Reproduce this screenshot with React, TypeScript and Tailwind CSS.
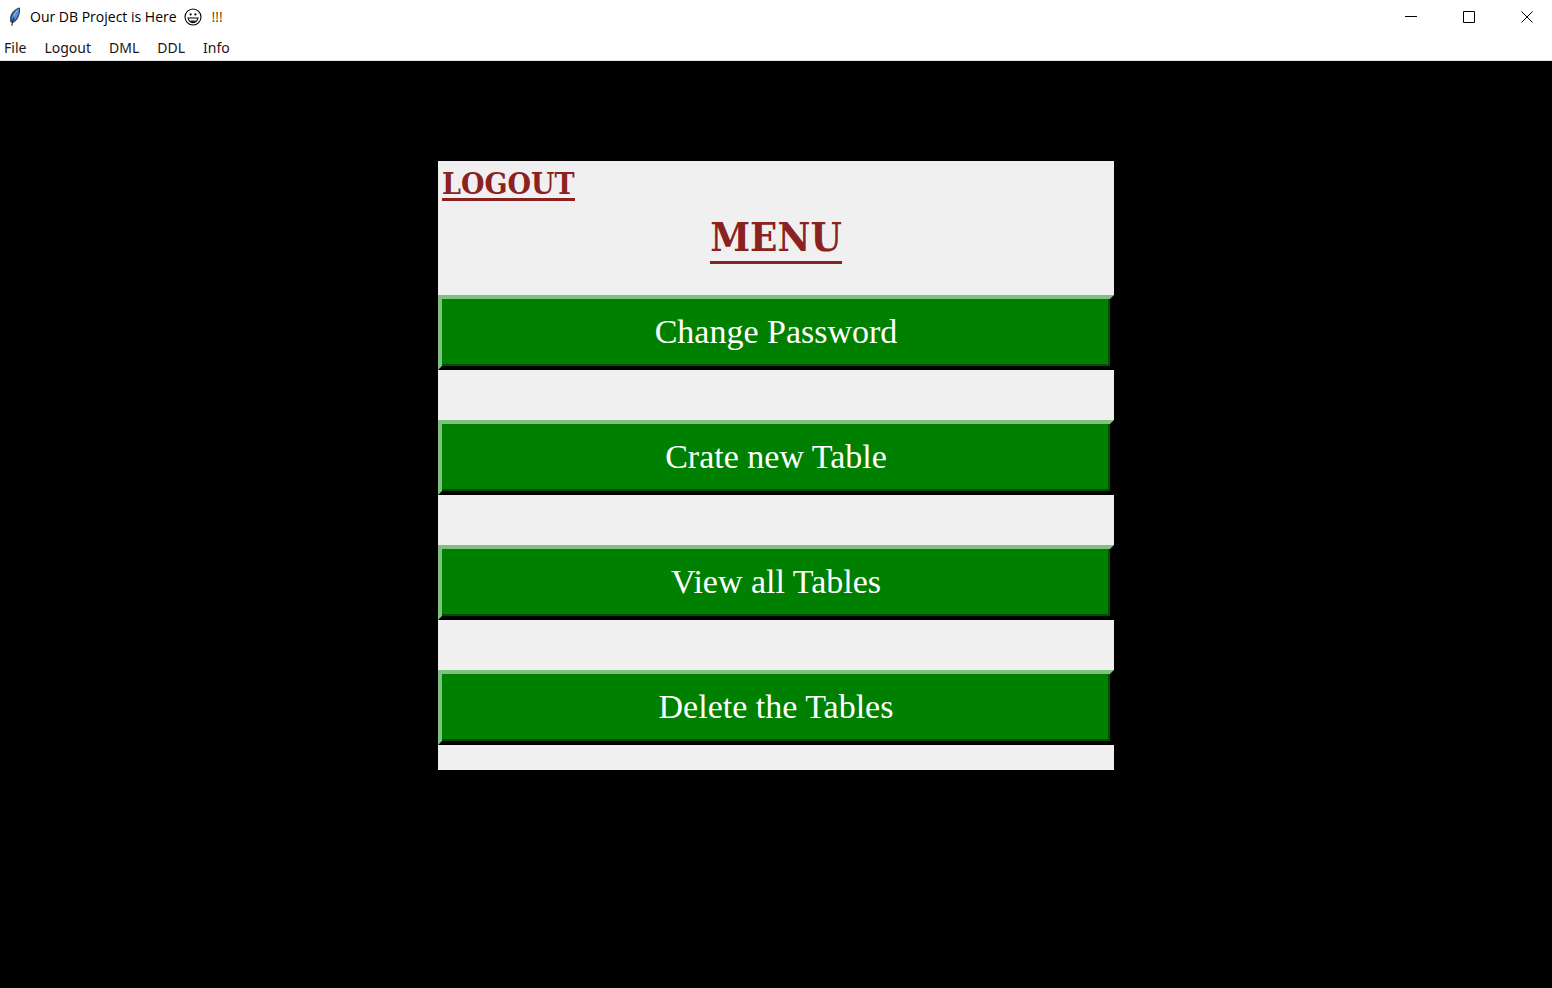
const menus = ["File", "Logout", "DML", "DDL", "Info"];

const actions = ["Change Password", "Crate new Table", "View all Tables", "Delete the Tables"];

function FeatherIcon() {
  return (
    <svg width="14" height="20" viewBox="0 0 14 20" aria-hidden="true">
      <path d="M11.8 .4 C8.4 .8 4.6 4 3 7.6 C1.8 10.4 1.8 13.4 2.4 15.2 L5.6 15.8 C8.8 13.6 10.8 10.6 11.6 7 C12.2 4.4 12.4 2.2 11.8 .4Z" fill="#34465a" />
      <path d="M10.8 1.6 C8 3 5.2 6.2 4 9.6 L3.6 14 L5 14.4 C7.8 12.2 9.8 9.6 10.6 6.4 C11 4.4 11.2 3 10.8 1.6Z" fill="#4a8fe0" />
      <path d="M5.8 10.6 C4.8 13 4.2 15.6 3.8 18.8" fill="none" stroke="#1b1b1b" strokeWidth="1.1" />
      <path d="M9.6 3 C8 4.8 6.6 7 5.8 9" fill="none" stroke="#8fc0fa" strokeWidth="1" />
    </svg>
  );
}

function GrinIcon() {
  return (
    <svg width="18" height="18" viewBox="0 0 18 18" fill="none" stroke="#000" strokeWidth="1.1" role="img" aria-label="grinning face">
      <circle cx="9" cy="9" r="8" />
      <path d="M4 10 H14 C13.4 12.8 11.6 14.6 9 14.6 C6.4 14.6 4.6 12.8 4 10Z" />
      <path d="M6.4 13.2 H11.6" strokeWidth="1.3" />
      <circle cx="6.6" cy="6.4" r="1.1" fill="#000" stroke="none" />
      <circle cx="11.4" cy="6.4" r="1.1" fill="#000" stroke="none" />
    </svg>
  );
}

function WindowButton({ label, path }: { label: string; path: string }) {
  return (
    <button type="button" aria-label={label} className="flex h-full w-[50px] items-center justify-center">
      <svg width="12" height="12" viewBox="0 0 12 12" fill="none" stroke="#000" strokeWidth="1">
        <path d={path} />
      </svg>
    </button>
  );
}

export default function App() {
  return (
    <div className="flex min-h-screen flex-col bg-black">
      <header className="border-b border-[#e6e6e6] bg-white font-['Open_Sans',sans-serif] text-sm leading-5 text-black">
        <div className="flex h-[34px] items-center justify-between">
          <div className="flex items-center pl-2">
            <FeatherIcon />
            <h1 className="flex items-center whitespace-pre pl-2">
              <span className="pr-[7px]">Our DB Project is Here</span>
              <GrinIcon />
              <span className="pl-[10px] font-medium text-[#6b3a00]">!!!</span>
            </h1>
          </div>
          <div className="flex h-full gap-2">
            <WindowButton label="Minimize" path="M0 5.5H12" />
            <WindowButton label="Maximize" path="M.5 .5H11.5V11.5H.5Z" />
            <WindowButton label="Close" path="M.5 .5L11.5 11.5M11.5 .5L.5 11.5" />
          </div>
        </div>
        <nav className="flex h-[26px] items-center gap-[18px] pt-[2px] pl-1 font-['Noto_Sans',sans-serif] text-[#1c1420]">
          {menus.map((name) => (
            <button key={name} type="button">{name}</button>
          ))}
        </nav>
      </header>

      <main className="mx-auto mt-[100px] w-[44%] max-w-[676px] bg-[#f0f0f0] pb-[25px]">
        <div className="flex h-[134px] flex-col px-1 pt-[9px] font-['DejaVu_Serif_Condensed','DejaVu_Serif',serif] font-bold text-[#8b2222]">
          <button type="button" className="self-start border-b-[3px] text-3xl leading-7">LOGOUT</button>
          <h2 className="mt-3 self-center border-b-[3px] text-[40px] leading-[48px]">MENU</h2>
        </div>
        <div className="flex flex-col gap-[50px]">
          {actions.map((label) => (
            <button
              key={label}
              type="button"
              className="h-[75px] border-4 border-t-[#80c080] border-r-black border-b-black border-l-[#80c080] bg-[#008000] pb-[2px] font-['Liberation_Serif',serif] text-[34px] leading-10 text-white shadow-[inset_-2px_-2px_0_#005000]"
            >
              {label}
            </button>
          ))}
        </div>
      </main>
    </div>
  );
}
